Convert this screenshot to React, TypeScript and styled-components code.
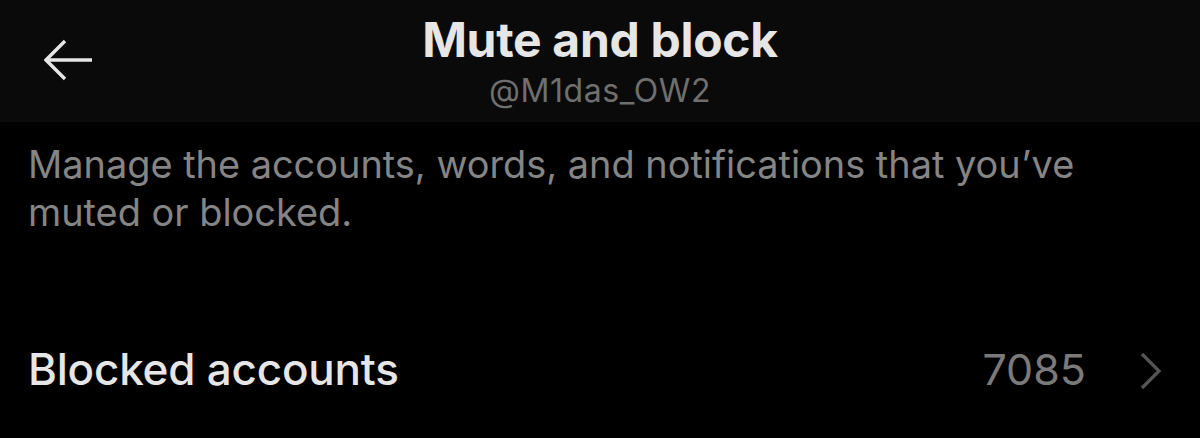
import React from "react";
import styled, { createGlobalStyle } from "styled-components";

const Global = createGlobalStyle`
  html, body { margin: 0; padding: 0; background: #000; }
  body { font-family: Inter, "Liberation Sans", sans-serif; -webkit-font-smoothing: antialiased; }
`;

const Page = styled.div`
  width: 1200px;
  height: 438px;
  background: #000;
  overflow: hidden;
  display: flex;
  flex-direction: column;
`;

const Header = styled.header`
  height: 122px;
  background: #0a0a0a;
  display: grid;
  grid-template-columns: 1fr auto 1fr;
  align-items: center;
  padding: 0 44px;
`;

const BackButton = styled.button`
  justify-self: start;
  background: none;
  border: 0;
  padding: 0;
  width: 48px;
  height: 42px;
  display: flex;
  align-items: center;
  color: #e6e6e6;
  cursor: pointer;
  margin-top: -2px;
`;

const TitleBlock = styled.div`
  display: flex;
  flex-direction: column;
  align-items: center;
`;

const Title = styled.h1`
  margin: 0;
  font-size: 48px;
  line-height: 58px;
  font-weight: 700;
  color: #e6e6e6;
  letter-spacing: -0.3px;
`;

const Handle = styled.div`
  font-size: 32px;
  line-height: 40px;
  color: #6f6f6f;
  margin-top: 2px;
  letter-spacing: 0.6px;
`;

const Description = styled.p`
  margin: 0;
  padding: 18px 28px 0;
  max-width: 1080px;
  font-size: 37.9px;
  line-height: 48px;
  color: #858585;
  letter-spacing: 0px;
`;

const Row = styled.div`
  display: flex;
  align-items: center;
  padding: 0 38px 0 28px;
  margin-top: 103px;
  height: 60px;
`;

const RowLabel = styled.span`
  flex: 1;
  font-size: 44px;
  font-weight: 500;
  color: #e6e6e6;
  letter-spacing: -0.2px;
`;

const RowValue = styled.span`
  font-size: 43px;
  color: #7a7a7a;
  margin-right: 54px;
`;

const Chevron = styled.svg`
  width: 22px;
  height: 38px;
  color: #555;
  margin-top: 4px;
`;

export default function App() {
  return (
    <Page>
      <Global />
      <Header>
        <BackButton aria-label="Back">
          <svg width="48" height="42" viewBox="0 0 48 42" fill="none" stroke="currentColor" strokeWidth="3.4" strokeLinecap="butt" strokeLinejoin="miter">
            <path d="M48 21H2" />
            <path d="M21 2L2 21l19 19" />
          </svg>
        </BackButton>
        <TitleBlock>
          <Title>Mute and block</Title>
          <Handle>@M1das_OW2</Handle>
        </TitleBlock>
        <div />
      </Header>
      <Description>
        Manage the accounts, words, and notifications that you’ve muted or blocked.
      </Description>
      <Row>
        <RowLabel>Blocked accounts</RowLabel>
        <RowValue>7085</RowValue>
        <Chevron viewBox="0 0 22 38" fill="none" stroke="currentColor" strokeWidth="3.2">
          <path d="M2 2l17 17L2 36" />
        </Chevron>
      </Row>
    </Page>
  );
}
